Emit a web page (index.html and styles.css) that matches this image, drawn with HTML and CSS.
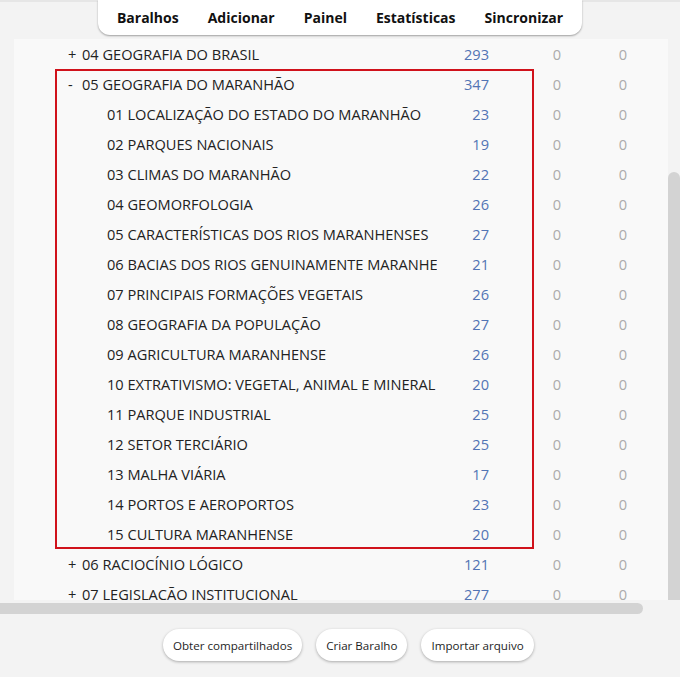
FILE: index.html
```html
<!DOCTYPE html>
<html lang="pt-BR">
<head>
    <meta charset="UTF-8">
    <title>Baralhos</title>
    <link rel="stylesheet" href="styles.css">
</head>
<body>
    <div class="topbar">
        <nav class="nav">
            <a>Baralhos</a>
            <a>Adicionar</a>
            <a>Painel</a>
            <a>Estatísticas</a>
            <a>Sincronizar</a>
        </nav>
    </div>

    <div class="main">
        <div class="panel">
            <div class="decks">
                <div class="row">
                    <div class="name"><span class="toggle">+</span>04 GEOGRAFIA DO BRASIL</div>
                    <div class="due">293</div><div class="zero">0</div><div class="zero">0</div>
                </div>

                <!-- grupo expandido -->
                <div class="group">
                    <div class="row">
                        <div class="name"><span class="toggle">-</span>05 GEOGRAFIA DO MARANHÃO</div>
                        <div class="due">347</div><div class="zero">0</div><div class="zero">0</div>
                    </div>
                    <div class="row child">
                        <div class="name">01 LOCALIZAÇÃO DO ESTADO DO MARANHÃO</div>
                        <div class="due">23</div><div class="zero">0</div><div class="zero">0</div>
                    </div>
                    <div class="row child">
                        <div class="name">02 PARQUES NACIONAIS</div>
                        <div class="due">19</div><div class="zero">0</div><div class="zero">0</div>
                    </div>
                    <div class="row child">
                        <div class="name">03 CLIMAS DO MARANHÃO</div>
                        <div class="due">22</div><div class="zero">0</div><div class="zero">0</div>
                    </div>
                    <div class="row child">
                        <div class="name">04 GEOMORFOLOGIA</div>
                        <div class="due">26</div><div class="zero">0</div><div class="zero">0</div>
                    </div>
                    <div class="row child">
                        <div class="name">05 CARACTERÍSTICAS DOS RIOS MARANHENSES</div>
                        <div class="due">27</div><div class="zero">0</div><div class="zero">0</div>
                    </div>
                    <div class="row child">
                        <div class="name">06 BACIAS DOS RIOS GENUINAMENTE MARANHENSES</div>
                        <div class="due">21</div><div class="zero">0</div><div class="zero">0</div>
                    </div>
                    <div class="row child">
                        <div class="name">07 PRINCIPAIS FORMAÇÕES VEGETAIS</div>
                        <div class="due">26</div><div class="zero">0</div><div class="zero">0</div>
                    </div>
                    <div class="row child">
                        <div class="name">08 GEOGRAFIA DA POPULAÇÃO</div>
                        <div class="due">27</div><div class="zero">0</div><div class="zero">0</div>
                    </div>
                    <div class="row child">
                        <div class="name">09 AGRICULTURA MARANHENSE</div>
                        <div class="due">26</div><div class="zero">0</div><div class="zero">0</div>
                    </div>
                    <div class="row child">
                        <div class="name">10 EXTRATIVISMO: VEGETAL, ANIMAL E MINERAL</div>
                        <div class="due">20</div><div class="zero">0</div><div class="zero">0</div>
                    </div>
                    <div class="row child">
                        <div class="name">11 PARQUE INDUSTRIAL</div>
                        <div class="due">25</div><div class="zero">0</div><div class="zero">0</div>
                    </div>
                    <div class="row child">
                        <div class="name">12 SETOR TERCIÁRIO</div>
                        <div class="due">25</div><div class="zero">0</div><div class="zero">0</div>
                    </div>
                    <div class="row child">
                        <div class="name">13 MALHA VIÁRIA</div>
                        <div class="due">17</div><div class="zero">0</div><div class="zero">0</div>
                    </div>
                    <div class="row child">
                        <div class="name">14 PORTOS E AEROPORTOS</div>
                        <div class="due">23</div><div class="zero">0</div><div class="zero">0</div>
                    </div>
                    <div class="row child">
                        <div class="name">15 CULTURA MARANHENSE</div>
                        <div class="due">20</div><div class="zero">0</div><div class="zero">0</div>
                    </div>
                </div>

                <div class="row">
                    <div class="name"><span class="toggle">+</span>06 RACIOCÍNIO LÓGICO</div>
                    <div class="due">121</div><div class="zero">0</div><div class="zero">0</div>
                </div>
                <div class="row">
                    <div class="name"><span class="toggle">+</span>07 LEGISLAÇÃO INSTITUCIONAL</div>
                    <div class="due">277</div><div class="zero">0</div><div class="zero">0</div>
                </div>
            </div>
        </div>
        <div class="vscroll"><div class="vthumb"></div></div>
    </div>

    <div class="hscroll"><div class="hthumb"></div></div>

    <footer class="actions">
        <button class="pill">Obter compartilhados</button>
        <button class="pill">Criar Baralho</button>
        <button class="pill">Importar arquivo</button>
    </footer>
</body>
</html>
```

FILE: styles.css
```css
/* Basic styling */
body {
    margin: 0;
    padding: 0;
    background-color: #f3f3f3;
    color: #1e1e1e;
    font-family: "Open Sans", "Noto Sans", sans-serif;
    height: 677px;
    overflow: hidden;
}

.topbar {
    height: 39px;
    display: flex;
    justify-content: center;
    border-top: 2px solid #e6e6e6;
    box-sizing: border-box;
}

.nav {
    position: relative;
    z-index: 2;
    height: 35px;
    margin-top: -2px;
    padding: 0 19px;
    display: flex;
    align-items: center;
    gap: 29px;
    background-color: #fff;
    border-radius: 0 0 12px 12px;
    box-shadow: 0 1px 2px rgba(0, 0, 0, 0.35);
}

.nav a {
    font-size: 14px;
    font-weight: 700;
    color: #111;
}

.main {
    display: flex;
    height: 564px;
}

.panel {
    flex: 1;
    margin-left: 14px;
    height: 561px;
    background-color: #f9f9f9;
    overflow: hidden;
}

.decks {
    padding-left: 46px;
}

.row {
    display: grid;
    grid-template-columns: 377px 52px 72px 66px;
    height: 30px;
    align-items: center;
    font-size: 14.6px;
    color: #222;
}

.name {
    padding-left: 8px;
    white-space: nowrap;
    overflow: hidden;
}

.toggle {
    display: inline-block;
    width: 14px;
}

.child .name {
    padding-left: 47px;
}

.due {
    text-align: right;
    color: #5274b4;
}

.zero {
    text-align: right;
    color: #ababab;
}

.group {
    position: relative;
}

/* destaque vermelho */
.group::after {
    content: "";
    position: absolute;
    left: -5px;
    top: 0;
    bottom: 0;
    width: 479px;
    border: 2px solid #d0121b;
    box-sizing: border-box;
    pointer-events: none;
}

.vscroll {
    width: 12px;
    padding-top: 133px;
    box-sizing: border-box;
}

.vthumb {
    height: 428px;
    background-color: #d3d3d3;
    border-radius: 6px 6px 0 0;
}

.hscroll {
    height: 11px;
}

.hthumb {
    width: 643px;
    height: 11px;
    background-color: #d3d3d3;
    border-radius: 0 6px 6px 0;
}

.actions {
    display: flex;
    gap: 14px;
    padding-left: 163px;
    padding-top: 15px;
}

.pill {
    height: 32px;
    padding: 0 10px;
    border: none;
    border-radius: 16px;
    background-color: #fff;
    color: #1e1e1e;
    font-family: "Open Sans", "Noto Sans", sans-serif;
    font-size: 11.6px;
    box-shadow: 0 1px 3px rgba(0, 0, 0, 0.3);
    cursor: pointer;
}
```
